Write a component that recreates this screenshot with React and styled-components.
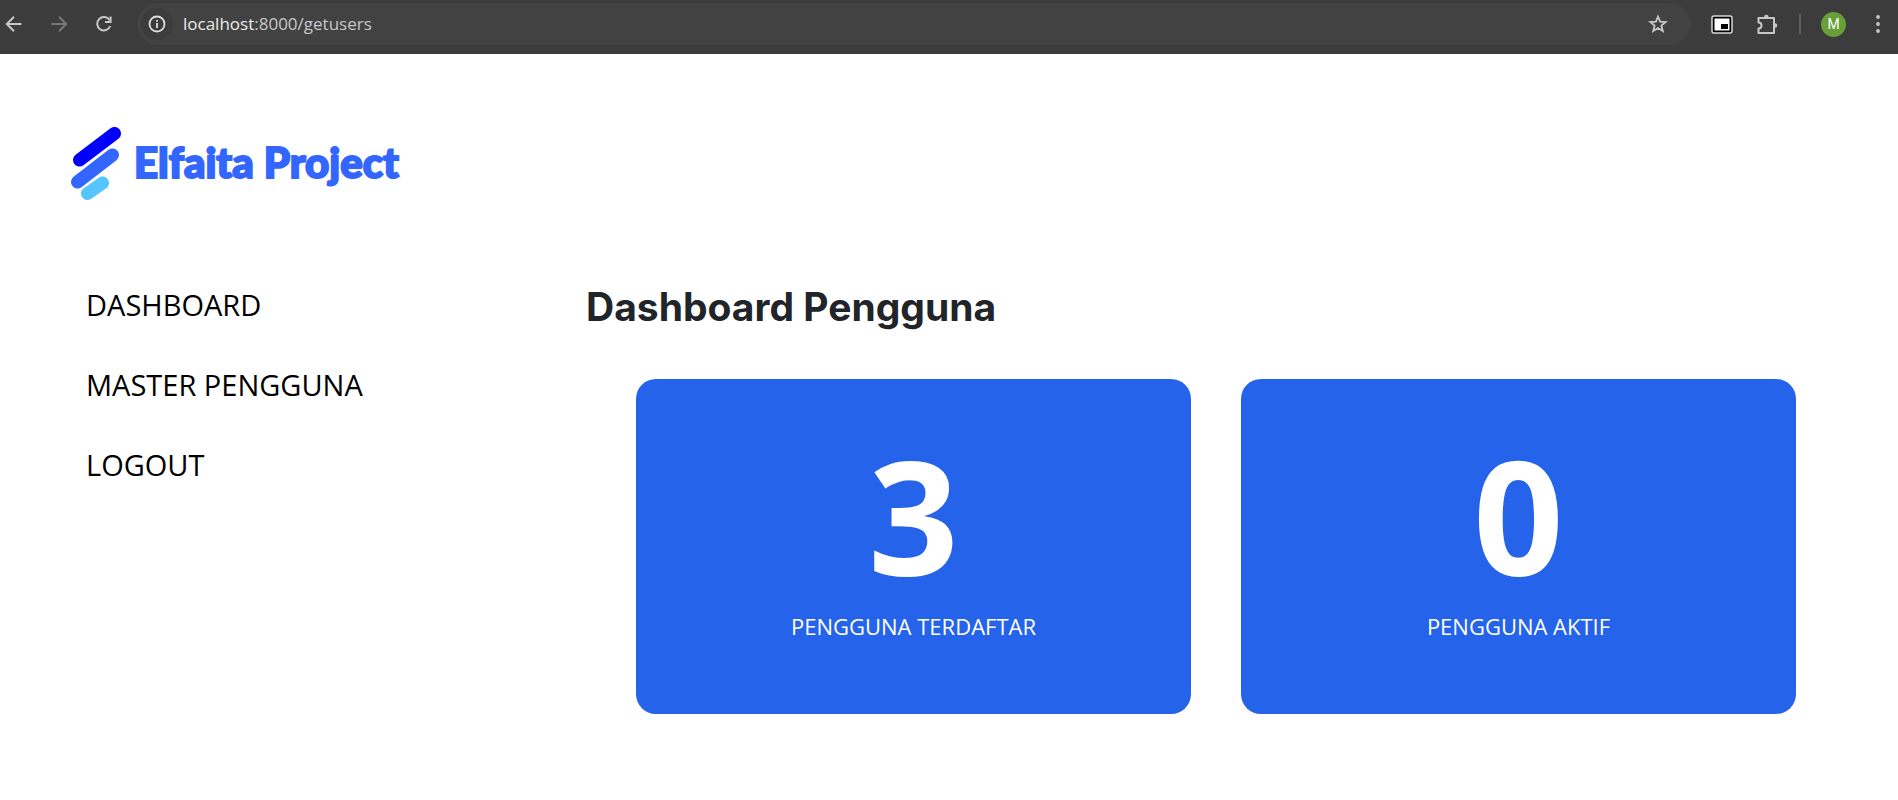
import React from "react";
import styled, { createGlobalStyle } from "styled-components";

const Global = createGlobalStyle`
  *, *::before, *::after { box-sizing: border-box; }
  body { margin: 0; background: #fff; color: #212529; font-family: "Open Sans", "Noto Sans", sans-serif; }
`;

const BrowserBar = styled.div`
  display: flex;
  align-items: center;
  gap: 21px;
  height: 54px;
  padding: 0 8px 6px 2px;
  background: #3c3c3c;
  color: #c7c7c7;
`;

const Tools = styled.div`
  display: flex;
  align-items: center;
  gap: 20px;
`;

const IconButton = styled.button`
  display: inline-flex;
  align-items: center;
  justify-content: center;
  flex: none;
  width: 24px;
  height: 24px;
  padding: 0;
  border: 0;
  border-radius: 50%;
  background: transparent;
  color: ${(p) => (p.$dim ? "#777" : "inherit")};
`;

const AddressBar = styled.div`
  display: flex;
  align-items: center;
  flex: 1;
  height: 42px;
  padding: 0 20px 0 4px;
  border-radius: 21px;
  background: #424242;
`;

const SiteInfo = styled(IconButton)`
  width: 32px;
  height: 32px;
  background: #3c3c3c;
  color: #dedede;
`;

const Url = styled.div`
  flex: 1;
  padding-left: 10px;
  font-size: 17px;
  line-height: 24px;
  color: #c7c7c7;
`;

const Host = styled.span`
  color: #ececec;
`;

const Divider = styled.span`
  width: 2px;
  height: 20px;
  background: #5e5e5e;
`;

const Avatar = styled.button`
  width: 25px;
  height: 25px;
  padding: 0;
  border: 0;
  border-radius: 50%;
  background: #689f38;
  color: #fff;
  font: 14px/25px Roboto, sans-serif;
`;

const Header = styled.header`
  padding: 70px 70px 0;
`;

const Brand = styled.a`
  display: inline-flex;
  align-items: center;
  gap: 12px;
  color: #3366ff;
  font: 900 42px/56px Lato, sans-serif;
  -webkit-text-stroke: 2px #3366ff;
  text-decoration: none;
`;

const Page = styled.div`
  display: flex;
  padding: 80px 102px 40px 86px;
`;

const Sidebar = styled.nav`
  flex: none;
  width: 500px;
`;

const Menu = styled.ul`
  display: flex;
  flex-direction: column;
  gap: 40px;
  margin: 0;
  padding: 0;
  list-style: none;
`;

const MenuLink = styled.a`
  display: block;
  color: #000;
  font-size: 29px;
  line-height: 40px;
  text-decoration: none;
`;

const Content = styled.main`
  flex: 1;
`;

const Title = styled.h1`
  margin: 0;
  font: 700 39px/44px Inter, sans-serif;
`;

const Cards = styled.div`
  display: grid;
  grid-template-columns: 1fr 1fr;
  gap: 50px;
  padding: 50px 0 0 50px;
`;

const Card = styled.section`
  display: flex;
  flex-direction: column;
  align-items: center;
  padding: 55px 24px 72px;
  border-radius: 20px;
  background: #2563eb;
  color: #fff;
`;

const Count = styled.strong`
  font-size: 158px;
  line-height: 160px;
`;

const Caption = styled.span`
  margin-top: 16px;
  font-size: 22px;
  line-height: 32px;
`;

const Svg = ({ size = 24, children, ...rest }) => (
  <svg width={size} height={size} viewBox="0 0 24 24" fill="none" aria-hidden="true" {...rest}>
    {children}
  </svg>
);

const BackIcon = () => (
  <Svg><path d="M19.5 12H5M12 4.8 4.8 12l7.2 7.2" stroke="currentColor" strokeWidth="2" /></Svg>
);
const ForwardIcon = () => (
  <Svg><path d="M4.5 12H19M12 4.8 19.2 12 12 19.2" stroke="currentColor" strokeWidth="2" /></Svg>
);
const ReloadIcon = () => (
  <Svg>
    <path d="M17.6 8.2A6.7 6.7 0 1 0 18.2 14" stroke="currentColor" strokeWidth="2" />
    <path d="M18.6 4.5v5.6H13" stroke="currentColor" strokeWidth="2" />
  </Svg>
);
const InfoIcon = () => (
  <Svg>
    <circle cx="12" cy="12" r="7.5" stroke="currentColor" strokeWidth="1.8" />
    <path d="M12 11v5M12 8v1.8" stroke="currentColor" strokeWidth="1.8" />
  </Svg>
);
const StarIcon = () => (
  <Svg>
    <path d="m12 4.500 2.100 5.100 5.600.4-4.300 3.600 1.400 5.400-4.800-3L7.200 19l1.400-5.400L4.300 10l5.600-.4z" stroke="currentColor" strokeWidth="1.800" />
  </Svg>
);
const MediaIcon = () => (
  <Svg>
    <rect x="1" y="4" width="20" height="17" rx="2" fill="#000" stroke="#d6d6d6" strokeWidth="1.5" />
    <rect x="3.5" y="6.500" width="15" height="12" fill="#fff" />
    <rect x="10" y="12" width="7" height="5" fill="#000" />
  </Svg>
);
const PuzzleIcon = () => (
  <Svg>
    <path d="M3.500 6H19v15H3.500v-4.500a3 3 0 0 0 0-6z" stroke="currentColor" strokeWidth="2" strokeLinejoin="round" />
    <path d="M9 5a2.300 2.300 0 0 1 4.600 0zM20 11.200a2.300 2.300 0 0 1 0 4.600z" fill="currentColor" />
  </Svg>
);
const DotsIcon = () => (
  <Svg fill="currentColor">
    <circle cx="12" cy="5" r="1.900" /><circle cx="12" cy="12" r="1.900" /><circle cx="12" cy="19" r="1.900" />
  </Svg>
);
const BrandMark = () => (
  <svg width="52" height="76" viewBox="0 0 52 76" fill="none" strokeLinecap="round" strokeWidth="13" aria-hidden="true">
    <path d="M9.5 36 44.5 9.5" stroke="#0000ff" />
    <path d="M7.5 58 42.5 31" stroke="#3366ff" />
    <path d="M17.5 69.500 32.500 59" stroke="#54c5ff" />
  </svg>
);

const menu = ["DASHBOARD", "MASTER PENGGUNA", "LOGOUT"];
const stats = [
  { count: 3, caption: "PENGGUNA TERDAFTAR" },
  { count: 0, caption: "PENGGUNA AKTIF" },
];

export default function App() {
  return (
    <>
      <Global />
      <BrowserBar>
        <IconButton aria-label="Back"><BackIcon /></IconButton>
        <IconButton aria-label="Forward" $dim><ForwardIcon /></IconButton>
        <IconButton aria-label="Reload"><ReloadIcon /></IconButton>
        <AddressBar>
          <SiteInfo aria-label="Site information"><InfoIcon /></SiteInfo>
          <Url><Host>localhost</Host>:8000/getusers</Url>
          <IconButton aria-label="Bookmark"><StarIcon /></IconButton>
        </AddressBar>
        <Tools>
          <IconButton aria-label="Media"><MediaIcon /></IconButton>
          <IconButton aria-label="Extensions"><PuzzleIcon /></IconButton>
          <Divider />
          <Avatar aria-label="Profile">M</Avatar>
          <IconButton aria-label="Menu"><DotsIcon /></IconButton>
        </Tools>
      </BrowserBar>
      <Header>
        <Brand href="#"><BrandMark />Elfaita Project</Brand>
      </Header>
      <Page>
        <Sidebar>
          <Menu>
            {menu.map((label) => (
              <li key={label}><MenuLink href="#">{label}</MenuLink></li>
            ))}
          </Menu>
        </Sidebar>
        <Content>
          <Title>Dashboard Pengguna</Title>
          <Cards>
            {stats.map((s) => (
              <Card key={s.caption}>
                <Count>{s.count}</Count>
                <Caption>{s.caption}</Caption>
              </Card>
            ))}
          </Cards>
        </Content>
      </Page>
    </>
  );
}
